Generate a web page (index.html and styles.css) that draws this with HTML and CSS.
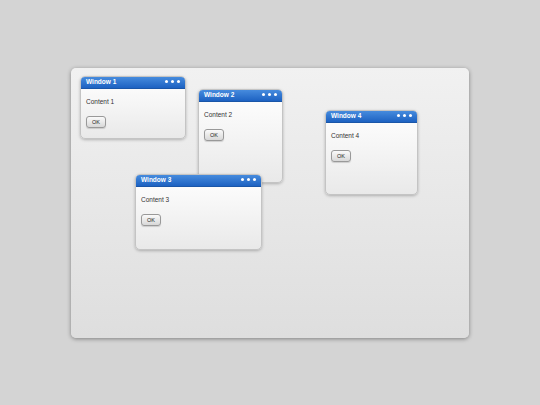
FILE: index.html
```html
<!DOCTYPE html>
<html>
<head>
<meta charset="utf-8">
<link rel="stylesheet" href="styles.css">
</head>
<body>
<div class="stage">
  <div class="desktop">
    <div class="win w1">
      <div class="titlebar"><span class="title">Window 1</span><span class="dots"><i></i><i></i><i></i></span></div>
      <div class="body"><p class="text">Content 1</p><button class="btn">OK</button></div>
    </div>
    <div class="win w2">
      <div class="titlebar"><span class="title">Window 2</span><span class="dots"><i></i><i></i><i></i></span></div>
      <div class="body"><p class="text">Content 2</p><button class="btn">OK</button></div>
    </div>
    <div class="win w4">
      <div class="titlebar"><span class="title">Window 4</span><span class="dots"><i></i><i></i><i></i></span></div>
      <div class="body"><p class="text">Content 4</p><button class="btn">OK</button></div>
    </div>
    <div class="win w3">
      <div class="titlebar"><span class="title">Window 3</span><span class="dots"><i></i><i></i><i></i></span></div>
      <div class="body"><p class="text">Content 3</p><button class="btn">OK</button></div>
    </div>
  </div>
</div>
</body>
</html>
```
FILE: styles.css
```css
html, body {
  margin: 0;
  padding: 0;
  background: #d4d4d4;
  font-family: "Liberation Sans", Arial, sans-serif;
}
.stage {
  width: 540px;
  height: 405px;
  display: flex;
  align-items: center;
  justify-content: center;
}
.desktop {
  position: relative;
  width: 398px;
  height: 270px;
  box-sizing: border-box;
  border-radius: 5px;
  background: linear-gradient(#f1f1f1, #dedede);
  box-shadow: 0 1px 4px rgba(0,0,0,0.4);
}
.win {
  position: absolute;
  box-sizing: border-box;
  border: 1px solid #c4c4c4;
  border-radius: 5px;
  background: linear-gradient(#ffffff, #e9e9e9);
  box-shadow: 0 1px 3px rgba(0,0,0,0.25);
  overflow: hidden;
}
.w1 { left: 9px; top: 8px; width: 106px; height: 63px; }
.w2 { left: 127px; top: 21px; width: 85px; height: 94px; }
.w3 { left: 64px; top: 106px; width: 127px; height: 76px; }
.w4 { left: 254px; top: 42px; width: 93px; height: 85px; }
.titlebar {
  height: 12px;
  margin: -1px -1px 0;
  padding: 0 6px 0 6px;
  display: flex;
  align-items: center;
  justify-content: space-between;
  background: linear-gradient(#4a8fe0, #1d62c2);
  border-bottom: 1px solid #1a56a8;
}
.title {
  color: #fff;
  font-weight: bold;
  font-size: 6.5px;
  line-height: 12px;
}
.dots {
  display: flex;
  gap: 3px;
}
.dots i {
  display: block;
  width: 3px;
  height: 3px;
  border-radius: 50%;
  background: #fff;
}
.body {
  padding: 9px 5px 0;
  display: flex;
  flex-direction: column;
  align-items: flex-start;
  gap: 10px;
}
.text {
  margin: 0;
  font-size: 6.5px;
  line-height: 8px;
  color: #333;
}
.btn {
  width: 20px;
  height: 12px;
  padding: 0;
  box-sizing: border-box;
  border: 1px solid #999;
  border-radius: 3px;
  background: linear-gradient(#fafafa, #d8d8d8);
  font-family: "Liberation Sans", Arial, sans-serif;
  font-size: 5.5px;
  color: #222;
  box-shadow: 0 1px 1px rgba(0,0,0,0.15);
}
```
